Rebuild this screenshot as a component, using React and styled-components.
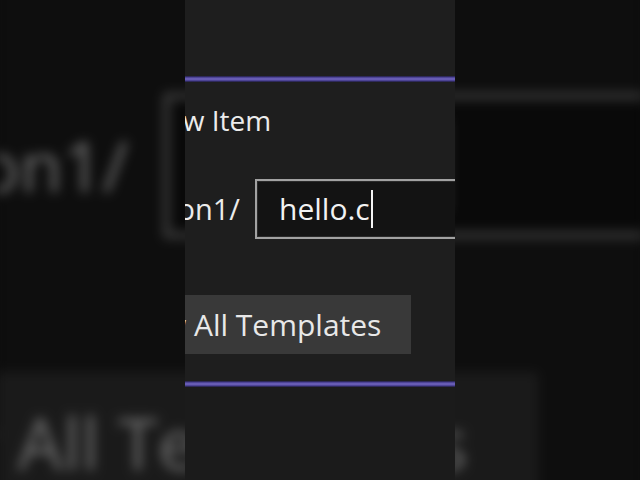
import React from 'react';
import styled, { createGlobalStyle } from 'styled-components';

const GlobalStyle = createGlobalStyle`
  html, body {
    margin: 0;
    padding: 0;
    background: #0d0d0d;
  }
  * {
    box-sizing: border-box;
  }
`;

const Stage = styled.div`
  width: 640px;
  height: 480px;
  display: grid;
  overflow: hidden;
  background: #0d0d0d;
  font-family: "Open Sans", "Noto Sans", "DejaVu Sans", sans-serif;
`;

// the backdrop is the same crop, zoomed and blurred behind the sharp one
const Layer = styled.div`
  grid-area: 1 / 1;
  position: relative;
  z-index: ${(p) => (p.$backdrop ? 0 : 1)};
  display: flex;
  justify-content: center;
  transform-origin: 320px 240px;
  transform: ${(p) => (p.$backdrop ? 'scale(2.4)' : 'none')};
  filter: ${(p) => (p.$backdrop ? 'blur(2.5px) brightness(0.46)' : 'none')};
`;

const Panel = styled.div`
  width: 270px;
  height: 480px;
  background: #1e1e1e;
  overflow: hidden;
  display: flex;
  flex-direction: column;
  color: #ececec;
`;

const AccentLine = styled.div`
  height: 6px;
  flex-shrink: 0;
  margin-top: ${(p) => p.$top}px;
  background: linear-gradient(
    to bottom,
    #1f1c3c 0%,
    #4d4496 25%,
    #7468c2 50%,
    #4d4496 75%,
    #1f1c3c 100%
  );
`;

const Title = styled.div`
  margin-top: 20px;
  margin-left: -39px;
  font-size: 28px;
  line-height: 36px;
  white-space: nowrap;
`;

const PathRow = styled.div`
  margin-top: 41px;
  display: flex;
  align-items: center;
  gap: 15px;
`;

const PathLabel = styled.div`
  width: 55px;
  flex-shrink: 0;
  display: flex;
  justify-content: flex-end;
  overflow: hidden;
  white-space: nowrap;
  font-size: 29px;
  line-height: 36px;
`;

const NameInput = styled.div`
  width: 400px;
  height: 60px;
  flex-shrink: 0;
  display: flex;
  align-items: center;
  padding-left: 22px;
  border: 2px solid #a2a2a2;
  box-shadow: inset 0 0 0 1px #2a2a2a;
  background: #131313;
  font-size: 30px;
  line-height: 36px;
  color: #f2f2f2;
`;

const Caret = styled.span`
  width: 2px;
  height: 38px;
  margin-left: 1px;
  background: #f4f4f4;
`;

const TemplatesButton = styled.div`
  align-self: flex-start;
  margin-top: 56px;
  margin-left: -105px;
  height: 59px;
  padding: 0 30px;
  display: flex;
  align-items: center;
  background: #393939;
  font-size: 30px;
  line-height: 36px;
  white-space: pre;
  color: #e8e8e8;
`;

const BottomFill = styled.div`
  flex: 1;
  background: #1b1b1b;
`;

const DialogCrop = () => (
  <Panel>
    <AccentLine $top={76} />
    <Title>New Item</Title>
    <PathRow>
      <PathLabel>ConsoleApplication1/</PathLabel>
      <NameInput>
        hello.c
        <Caret />
      </NameInput>
    </PathRow>
    <TemplatesButton>Show All Templates</TemplatesButton>
    <AccentLine $top={27} />
    <BottomFill />
  </Panel>
);

const App = () => (
  <>
    <GlobalStyle />
    <Stage>
      <Layer $backdrop aria-hidden="true">
        <DialogCrop />
      </Layer>
      <Layer>
        <DialogCrop />
      </Layer>
    </Stage>
  </>
);

export default App;
